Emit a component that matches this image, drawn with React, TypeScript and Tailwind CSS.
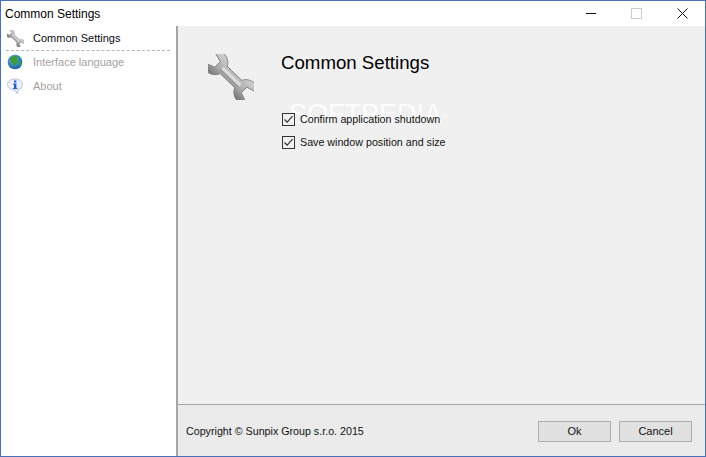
const sans = { fontFamily: '"Liberation Sans", Arial, sans-serif' };

function Wrench({ size, id }: { size: number; id: string }) {
  return (
    <svg width={size} height={size} viewBox="0 0 50 50" className="shrink-0">
      <defs>
        <linearGradient id={id} x1="0" y1="0" x2="0" y2="1">
          <stop offset="0" stopColor="#d2d2d2" />
          <stop offset="0.55" stopColor="#adadad" />
          <stop offset="1" stopColor="#727272" />
        </linearGradient>
      </defs>
      <g transform="translate(25 25) rotate(44)">
        <path
          d="M-11 -5.5 L11 -5.5 C13 -10 18 -13 24 -13 L31.5 -9.5 L29 -6.5 L20 -4 L20 4.5 L29 8 L31 11.5 L24 14 C18 14 13 10.5 11 5.5 L-11 5.5 C-13 10.5 -18 14 -24 14 L-31 11.5 L-29 8 L-20 4.5 L-20 -4 L-29 -6.5 L-31.5 -9.5 L-24 -13 C-18 -13 -13 -10 -11 -5.5 Z"
          fill={`url(#${id})`}
          stroke="#808080"
          strokeWidth="1"
        />
        <rect x="-14" y="-2.5" width="28" height="4" rx="2" fill="#dadada" />
        <rect x="-14" y="1.5" width="28" height="1.2" fill="#8f8f8f" />
      </g>
    </svg>
  );
}

function Globe() {
  return (
    <svg width="16" height="16" viewBox="0 0 16 16" className="shrink-0">
      <defs>
        <radialGradient id="g1" cx="0.4" cy="0.35" r="0.75">
          <stop offset="0" stopColor="#7fc4ef" />
          <stop offset="0.6" stopColor="#2a7cc4" />
          <stop offset="1" stopColor="#124f8e" />
        </radialGradient>
      </defs>
      <circle cx="8" cy="8" r="7.3" fill="url(#g1)" />
      <path d="M3 4 C5 2 9 1.5 11 2.5 L10 5 L11.5 7 L9 10 L7.5 13 L6 10 L3.5 8 Z" fill="#3f9a38" />
      <path d="M12 8 L14.5 7 L14 11 L12 12.5 Z" fill="#3f9a38" />
    </svg>
  );
}

function Info() {
  return (
    <svg width="16" height="17" viewBox="0 0 16 17" className="shrink-0">
      <path
        d="M8 1 C12 1 15.5 3 15.5 6.5 C15.5 9.5 13.5 11 11.5 11.5 L10.5 16 L8 12 C4 12 0.5 10 0.5 6.5 C0.5 3 4 1 8 1 Z"
        fill="#eeeefa"
        stroke="#b4b4d4"
        strokeWidth="0.8"
      />
      <rect x="7" y="2.5" width="2.4" height="2" fill="#1560d8" />
      <path d="M6 5.5 H9.4 V10 H10.4 V11 H6 V10 H7 V6.5 H6 Z" fill="#1560d8" />
    </svg>
  );
}

function NavItem({ icon, label, active }: { icon: React.ReactNode; label: string; active?: boolean }) {
  return (
    <div className={`flex items-center h-6 pl-[6px] gap-[10px] text-[11px] ${active ? "text-[#0a0a14]" : "text-[#a8a0a0]"}`}>
      <span className="w-4 flex justify-center">{icon}</span>
      <span>{label}</span>
    </div>
  );
}

function Check({ label }: { label: string }) {
  return (
    <label className="flex items-center gap-[5px] h-[13px] text-[10.7px] text-[#111]">
      <svg width="13" height="13" viewBox="0 0 13 13" className="shrink-0">
        <rect x="0.5" y="0.5" width="12" height="12" fill="none" stroke="#333" />
        <path d="M2.5 6.5 L5.2 9.2 L10.5 3.2" fill="none" stroke="#333" strokeWidth="1.2" />
      </svg>
      <span>{label}</span>
    </label>
  );
}

function Btn({ label }: { label: string }) {
  return (
    <button className="w-[73px] h-[21px] border border-[#adadad] bg-[#e1e1e1] text-[11px] text-[#111]">
      {label}
    </button>
  );
}

export default function App() {
  return (
    <div
      style={sans}
      className="relative w-[706px] h-[457px] flex flex-col border border-[#4a70b8] bg-white overflow-hidden"
    >
      <div className="h-[25px] flex items-center shrink-0 pl-1 text-[12px] text-black">
        <span className="flex-1">Common Settings</span>
        <svg width="10" height="1" viewBox="0 0 10 1" className="mr-[35px]">
          <rect width="10" height="1" fill="#111" />
        </svg>
        <svg width="11" height="11" viewBox="0 0 11 11" className="mr-[35px]">
          <rect x="0.5" y="0.5" width="10" height="10" fill="none" stroke="#cccccc" />
        </svg>
        <svg width="11" height="11" viewBox="0 0 11 11" className="mr-[17px]">
          <path d="M0.5 0.5 L10.5 10.5 M10.5 0.5 L0.5 10.5" stroke="#111" strokeWidth="1" />
        </svg>
      </div>
      <div className="flex-1 flex min-h-0">
        <aside className="w-[177px] shrink-0 border-r-2 border-[#a6a6a6]">
          <NavItem icon={<Wrench size={17} id="w1" />} label="Common Settings" active />
          <div className="border-b border-dashed border-[#b5b5b5] ml-[5px] w-[164px] -mb-px" />
          <NavItem icon={<Globe />} label="Interface language" />
          <NavItem icon={<Info />} label="About" />
        </aside>
        <main className="flex-1 flex flex-col bg-[#f0f0f0]">
          <div className="relative flex-1 flex gap-[27px] pl-[30px] pt-[25px]">
            <span className="absolute left-[111px] top-[66px] text-[27px] leading-[44px] text-white/80 pointer-events-none">
              SOFTPEDIA<sup className="text-[8px]">®</sup>
            </span>
            <div className="mt-[3px]">
              <Wrench size={46} id="w2" />
            </div>
            <div className="relative">
              <h1 className="text-[18.67px] leading-6 text-black">Common Settings</h1>
              <div className="mt-[38px] ml-px flex flex-col gap-[10px]">
                <Check label="Confirm application shutdown" />
                <Check label="Save window position and size" />
              </div>
            </div>
          </div>
          <footer className="h-[52px] shrink-0 flex items-center justify-between pl-2 pr-[13px] pt-[1px] border-t border-[#a6a6a6] bg-[#ebebeb] text-[10.7px] text-[#111]">
            <span>Copyright © Sunpix Group s.r.o. 2015</span>
            <div className="flex gap-2">
              <Btn label="Ok" />
              <Btn label="Cancel" />
            </div>
          </footer>
        </main>
      </div>
    </div>
  );
}
